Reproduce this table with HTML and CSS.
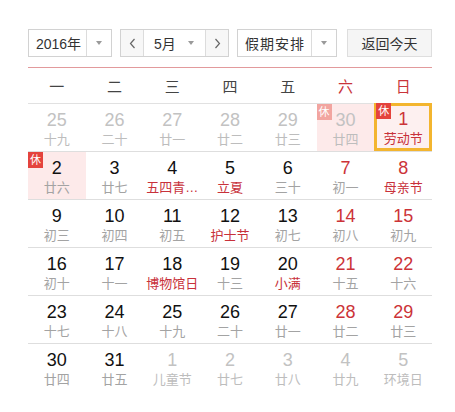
FILE: index.html
```html
<!DOCTYPE html>
<html lang="zh-CN">
<head>
<meta charset="utf-8">
<title>万年历</title>
<link rel="stylesheet" href="styles.css">
</head>
<body>
<div class="cal">
  <div class="toolbar">
    <div class="box year">
      <span class="label">2016年</span>
      <span class="drop"><i class="tri"></i></span>
    </div>
    <div class="box month">
      <span class="nav"><svg width="7" height="11" viewBox="0 0 7 11"><polyline points="5.5,1 1.5,5.5 5.5,10" fill="none" stroke="#666" stroke-width="1.2"/></svg></span>
      <span class="mid">5月<i class="tri"></i></span>
      <span class="nav next"><svg width="7" height="11" viewBox="0 0 7 11"><polyline points="1.5,1 5.5,5.5 1.5,10" fill="none" stroke="#666" stroke-width="1.2"/></svg></span>
    </div>
    <div class="box holiday">
      <span class="label">假期安排</span>
      <span class="drop"><i class="tri"></i></span>
    </div>
    <div class="box today">返回今天</div>
  </div>
  <div class="redline"></div>
  <div class="week">
    <span>一</span><span>二</span><span>三</span><span>四</span><span>五</span><span class="we">六</span><span class="we">日</span>
  </div>
  <div class="grid">
    <div class="row">
      <div class="cell other"><b>25</b><em>十九</em></div>
      <div class="cell other"><b>26</b><em>二十</em></div>
      <div class="cell other"><b>27</b><em>廿一</em></div>
      <div class="cell other"><b>28</b><em>廿二</em></div>
      <div class="cell other"><b>29</b><em>廿三</em></div>
      <div class="cell other rest"><span class="badge">休</span><b>30</b><em>廿四</em></div>
      <div class="cell rest sel wkd"><span class="badge">休</span><b>1</b><em class="fest">劳动节</em></div>
    </div>
    <div class="row">
      <div class="cell rest"><span class="badge">休</span><b>2</b><em>廿六</em></div>
      <div class="cell"><b>3</b><em>廿七</em></div>
      <div class="cell"><b>4</b><em class="fest">五四青…</em></div>
      <div class="cell"><b>5</b><em class="fest">立夏</em></div>
      <div class="cell"><b>6</b><em>三十</em></div>
      <div class="cell wkd"><b>7</b><em>初一</em></div>
      <div class="cell wkd"><b>8</b><em class="fest">母亲节</em></div>
    </div>
    <div class="row">
      <div class="cell"><b>9</b><em>初三</em></div>
      <div class="cell"><b>10</b><em>初四</em></div>
      <div class="cell"><b>11</b><em>初五</em></div>
      <div class="cell"><b>12</b><em class="fest">护士节</em></div>
      <div class="cell"><b>13</b><em>初七</em></div>
      <div class="cell wkd"><b>14</b><em>初八</em></div>
      <div class="cell wkd"><b>15</b><em>初九</em></div>
    </div>
    <div class="row">
      <div class="cell"><b>16</b><em>初十</em></div>
      <div class="cell"><b>17</b><em>十一</em></div>
      <div class="cell"><b>18</b><em class="fest">博物馆日</em></div>
      <div class="cell"><b>19</b><em>十三</em></div>
      <div class="cell"><b>20</b><em class="fest">小满</em></div>
      <div class="cell wkd"><b>21</b><em>十五</em></div>
      <div class="cell wkd"><b>22</b><em>十六</em></div>
    </div>
    <div class="row">
      <div class="cell"><b>23</b><em>十七</em></div>
      <div class="cell"><b>24</b><em>十八</em></div>
      <div class="cell"><b>25</b><em>十九</em></div>
      <div class="cell"><b>26</b><em>二十</em></div>
      <div class="cell"><b>27</b><em>廿一</em></div>
      <div class="cell wkd"><b>28</b><em>廿二</em></div>
      <div class="cell wkd"><b>29</b><em>廿三</em></div>
    </div>
    <div class="row last">
      <div class="cell"><b>30</b><em>廿四</em></div>
      <div class="cell"><b>31</b><em>廿五</em></div>
      <div class="cell other"><b>1</b><em>儿童节</em></div>
      <div class="cell other"><b>2</b><em>廿七</em></div>
      <div class="cell other"><b>3</b><em>廿八</em></div>
      <div class="cell other"><b>4</b><em>廿九</em></div>
      <div class="cell other"><b>5</b><em>环境日</em></div>
    </div>
  </div>
</div>
</body>
</html>
```

FILE: styles.css
```css
html, body {
  margin: 0;
  padding: 0;
  background: #fff;
}
body {
  font-family: "Liberation Sans", "Noto Sans CJK SC", sans-serif;
  color: #333;
}
.cal {
  width: 404px;
  padding: 29px 0 0 28px;
}
.toolbar {
  display: flex;
  height: 28px;
  font-size: 14px;
}
.box {
  box-sizing: border-box;
  height: 28px;
  border: 1px solid #d2d2d2;
  background: #fff;
  display: flex;
  align-items: center;
  margin-right: 8px;
}
.box .label {
  flex: 1;
  text-align: center;
}
.box .drop {
  width: 24px;
  height: 100%;
  border-left: 1px solid #dcdcdc;
  display: flex;
  align-items: center;
  justify-content: center;
}
.tri {
  display: inline-block;
  width: 0;
  height: 0;
  border-left: 3.5px solid transparent;
  border-right: 3.5px solid transparent;
  border-top: 4px solid #9a9a9a;
}
.year {
  width: 84px;
}
.year .label {
  padding-left: 2px;
}
.month {
  width: 109px;
}
.month .nav {
  width: 22px;
  height: 100%;
  display: flex;
  align-items: center;
  justify-content: center;
  background: #f7f7f7;
  border-right: 1px solid #dcdcdc;
}
.month .nav.next {
  border-right: none;
  border-left: 1px solid #dcdcdc;
}
.month .mid {
  flex: 1;
  display: flex;
  align-items: center;
  justify-content: space-between;
  padding: 0 11px 0 10px;
}
.holiday {
  width: 100px;
  margin-right: 10px;
}
.holiday .label {
  padding-left: 1px;
  letter-spacing: 1px;
}
.today {
  width: 85px;
  margin-right: 0;
  justify-content: center;
  background: #f5f5f5;
  border-color: #dedede;
}
.redline {
  margin-top: 10px;
  height: 1px;
  background: #e29a9c;
}
.week {
  display: grid;
  grid-template-columns: repeat(7, 1fr);
  height: 35px;
  border-bottom: 1px solid #e1e1e1;
  font-size: 15px;
  align-items: center;
  text-align: center;
  color: #444;
}
.week .we {
  color: #c9343a;
}
.row {
  display: grid;
  grid-template-columns: repeat(7, 1fr);
  border-bottom: 1px solid #dedede;
}
.row.last {
  border-bottom: none;
}
.cell {
  position: relative;
  box-sizing: border-box;
  height: 47px;
  padding-top: 6px;
  text-align: center;
}
.cell b {
  display: block;
  font-weight: normal;
  font-size: 18px;
  line-height: 20px;
  color: #111;
}
.cell em {
  display: block;
  font-style: normal;
  font-size: 13px;
  line-height: 16px;
  margin-top: 2px;
  color: #a3a3a3;
}
.cell.wkd b {
  color: #cc3338;
}
.cell em.fest {
  color: #c8313a;
}
.cell.other b {
  color: #c2c2c2;
}
.cell.other em {
  color: #bdbdbd;
}
.cell.rest {
  background: #fdeaea;
}
.cell.sel {
  border: 3px solid #f3b52f;
  padding-top: 3px;
  margin-top: -1px;
  height: 48px;
  background: #fdf0f0;
}
.badge {
  position: absolute;
  top: 0;
  left: 0;
  width: 15px;
  height: 16px;
  line-height: 16px;
  font-size: 11px;
  color: #fff;
  background: #e4433d;
  text-align: center;
}
.cell.other .badge {
  background: #f2a5a0;
}
.cell.sel .badge {
  top: -3px;
  left: -1px;
}
```
